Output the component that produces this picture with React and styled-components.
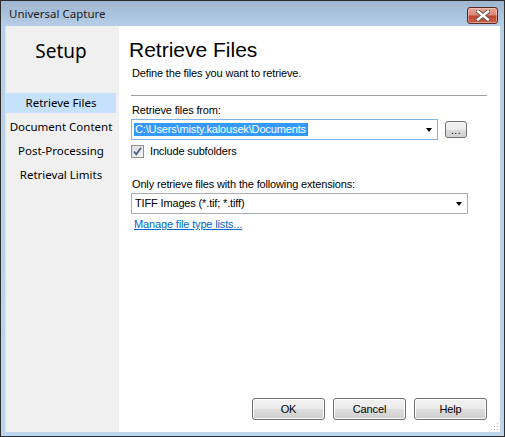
import React from "react"
import styled, { createGlobalStyle } from "styled-components"

const GlobalStyle = createGlobalStyle`
  html, body {
    margin: 0;
    padding: 0;
    background: #ffffff;
  }
  * {
    box-sizing: border-box;
  }
`

const navItems = ["Retrieve Files", "Document Content", "Post-Processing", "Retrieval Limits"]

const App = () => {
  return (
    <>
      <GlobalStyle />
      <Window>
        <TitleBar>
          <Title>Universal Capture</Title>
          <CloseButton aria-label="Close">
            <svg width="14" height="11" viewBox="0 0 14 11">
              <path
                d="M2 1.5 L12 9.5 M12 1.5 L2 9.5"
                stroke="#5a4a48"
                strokeWidth="4.2"
                strokeLinecap="square"
              />
              <path
                d="M2 1.5 L12 9.5 M12 1.5 L2 9.5"
                stroke="#ffffff"
                strokeWidth="2.4"
                strokeLinecap="square"
              />
            </svg>
          </CloseButton>
        </TitleBar>
        <Client>
          <Sidebar>
            <SidebarTitle>Setup</SidebarTitle>
            <NavList>
              {navItems.map((item, i) => (
                <NavItem key={item} $active={i === 0}>
                  {item}
                </NavItem>
              ))}
            </NavList>
          </Sidebar>
          <Panel>
            <Heading>Retrieve Files</Heading>
            <Description>Define the files you want to retrieve.</Description>
            <Divider />
            <FieldLabel>Retrieve files from:</FieldLabel>
            <FieldRow>
              <Combo $width={307} $focused>
                <Selection>C:\Users\misty.kalousek\Documents</Selection>
                <Caret />
                <DropArrow />
              </Combo>
              <BrowseButton>...</BrowseButton>
            </FieldRow>
            <CheckRow>
              <CheckBox>
                <svg width="11" height="11" viewBox="0 0 11 11">
                  <path
                    d="M2 5.5 L4.3 8.3 L9 1.8"
                    fill="none"
                    stroke="#4a5f8c"
                    strokeWidth="1.8"
                  />
                </svg>
              </CheckBox>
              <CheckLabel>Include subfolders</CheckLabel>
            </CheckRow>
            <FieldLabel $gap={20}>Only retrieve files with the following extensions:</FieldLabel>
            <FieldRow>
              <Combo $width={337}>
                <ComboText>TIFF Images (*.tif; *.tiff)</ComboText>
                <DropArrow />
              </Combo>
            </FieldRow>
            <ManageLink href="#">Manage file type lists...</ManageLink>
            <ButtonBar>
              <DialogButton>OK</DialogButton>
              <DialogButton>Cancel</DialogButton>
              <DialogButton>Help</DialogButton>
            </ButtonBar>
          </Panel>
          <Grip>
            <svg width="8" height="8" viewBox="0 0 8 8">
              <g fill="#b8b8b8">
                <rect x="6" y="0" width="1" height="1" />
                <rect x="3" y="3" width="1" height="1" />
                <rect x="6" y="3" width="1" height="1" />
                <rect x="0" y="6" width="1" height="1" />
                <rect x="3" y="6" width="1" height="1" />
                <rect x="6" y="6" width="1" height="1" />
              </g>
            </svg>
          </Grip>
        </Client>
      </Window>
    </>
  )
}

const Window = styled.div`
  width: 505px;
  height: 437px;
  border: 1px solid #2d2d2d;
  background: linear-gradient(to bottom, #9fb5d0 0px, #b7cfe9 26px, #bdd4ed 100%);
  display: flex;
  flex-direction: column;
`

const TitleBar = styled.div`
  height: 25px;
  display: flex;
  align-items: center;
  justify-content: space-between;
  padding: 0 6px 0 8px;
`

const Title = styled.span`
  font-family: "Noto Sans", "Liberation Sans", sans-serif;
  font-size: 11.5px;
  color: #1b1b1b;
  margin-top: -1px;
`

const CloseButton = styled.div`
  width: 31px;
  height: 17px;
  margin-top: 3px;
  border: 1px solid #5b2a22;
  border-radius: 3px;
  background: linear-gradient(to bottom, #e8a898 0%, #d98875 45%, #c0462f 55%, #c9614c 100%);
  box-shadow: inset 0 0 0 1px rgba(255, 220, 210, 0.45);
  display: flex;
  align-items: center;
  justify-content: center;
`

const Client = styled.div`
  position: relative;
  flex: 1;
  margin: 0 4px 4px 4px;
  display: flex;
  background: #ffffff;
  border-left: 1px solid #d7e5f4;
`

const Sidebar = styled.div`
  width: 113px;
  background: #f0f0f0;
  display: flex;
  flex-direction: column;
`

const SidebarTitle = styled.div`
  width: 110px;
  text-align: center;
  font-family: "Noto Sans", "Liberation Sans", sans-serif;
  font-size: 19px;
  line-height: 24px;
  color: #000000;
  margin-top: 13px;
`

const NavList = styled.div`
  display: flex;
  flex-direction: column;
  gap: 4px;
  margin-top: 30px;
`

const NavItem = styled.div`
  width: 110px;
  height: 20px;
  line-height: 20px;
  text-align: center;
  font-family: "Noto Sans", "Liberation Sans", sans-serif;
  font-size: 11.5px;
  color: #000000;
  background: ${props => (props.$active ? "#c6e1fb" : "transparent")};
`

const Panel = styled.div`
  flex: 1;
  display: flex;
  flex-direction: column;
  padding: 12px 12px 12px 12px;
  font-family: "Liberation Sans", Arial, sans-serif;
  font-size: 11px;
  letter-spacing: -0.15px;
  color: #000000;
`

const Heading = styled.div`
  font-size: 21px;
  line-height: 24px;
  letter-spacing: 0;
  margin-left: -2px;
`

const Description = styled.div`
  line-height: 13px;
  margin-top: 5px;
  margin-left: 1px;
`

const Divider = styled.div`
  height: 1px;
  background: #a0a0a0;
  margin-top: 15px;
  margin-right: 1px;
`

const FieldLabel = styled.div`
  line-height: 13px;
  margin-top: ${props => props.$gap || 8}px;
  margin-left: 1px;
`

const FieldRow = styled.div`
  display: flex;
  align-items: center;
  gap: 7px;
  margin-top: 2px;
`

const Combo = styled.div`
  position: relative;
  width: ${props => props.$width}px;
  height: 21px;
  border: 1px solid ${props => (props.$focused ? "#7eb4ea" : "#abadb3")};
  background: #ffffff;
  display: flex;
  align-items: center;
  padding-left: 2px;
`

const Selection = styled.span`
  background: #3399ff;
  color: #ffffff;
  line-height: 13px;
  padding: 0 1px;
`

const Caret = styled.span`
  width: 1px;
  height: 13px;
  background: #c46a1a;
`

const ComboText = styled.span`
  line-height: 13px;
  padding-left: 1px;
`

const DropArrow = styled.span`
  position: absolute;
  right: 5px;
  top: 8px;
  width: 0;
  height: 0;
  border-left: 3.5px solid transparent;
  border-right: 3.5px solid transparent;
  border-top: 4px solid #000000;
`

const BrowseButton = styled.div`
  width: 22px;
  height: 17px;
  border: 1px solid #707070;
  border-radius: 3px;
  background: linear-gradient(to bottom, #f4f4f4 0%, #ebebeb 50%, #dddddd 51%, #d0d0d0 100%);
  font-size: 10px;
  line-height: 17px;
  text-align: center;
  letter-spacing: 0.5px;
`

const CheckRow = styled.div`
  display: flex;
  align-items: center;
  gap: 6px;
  margin-top: 5px;
`

const CheckBox = styled.div`
  width: 13px;
  height: 13px;
  border: 1px solid #8f8f8f;
  background: linear-gradient(135deg, #dcdcdc 0%, #f6f6f6 100%);
  display: flex;
  align-items: center;
  justify-content: center;
`

const CheckLabel = styled.span`
  line-height: 13px;
`

const ManageLink = styled.a`
  color: #0066cc;
  text-decoration: underline;
  line-height: 13px;
  margin-top: 4px;
  margin-left: 3px;
  align-self: flex-start;
`

const ButtonBar = styled.div`
  margin-top: auto;
  display: flex;
  justify-content: flex-end;
  gap: 8px;
  margin-right: 1px;
`

const DialogButton = styled.div`
  width: 73px;
  height: 22px;
  border: 1px solid #707070;
  border-radius: 3px;
  background: linear-gradient(to bottom, #f2f2f2 0%, #ebebeb 50%, #dddddd 51%, #cfcfcf 100%);
  box-shadow: inset 0 0 0 1px #fcfcfc;
  display: flex;
  align-items: center;
  justify-content: center;
  font-size: 11px;
`

const Grip = styled.div`
  position: absolute;
  right: 1px;
  bottom: 1px;
  width: 8px;
  height: 8px;
  display: flex;
`

export default App
